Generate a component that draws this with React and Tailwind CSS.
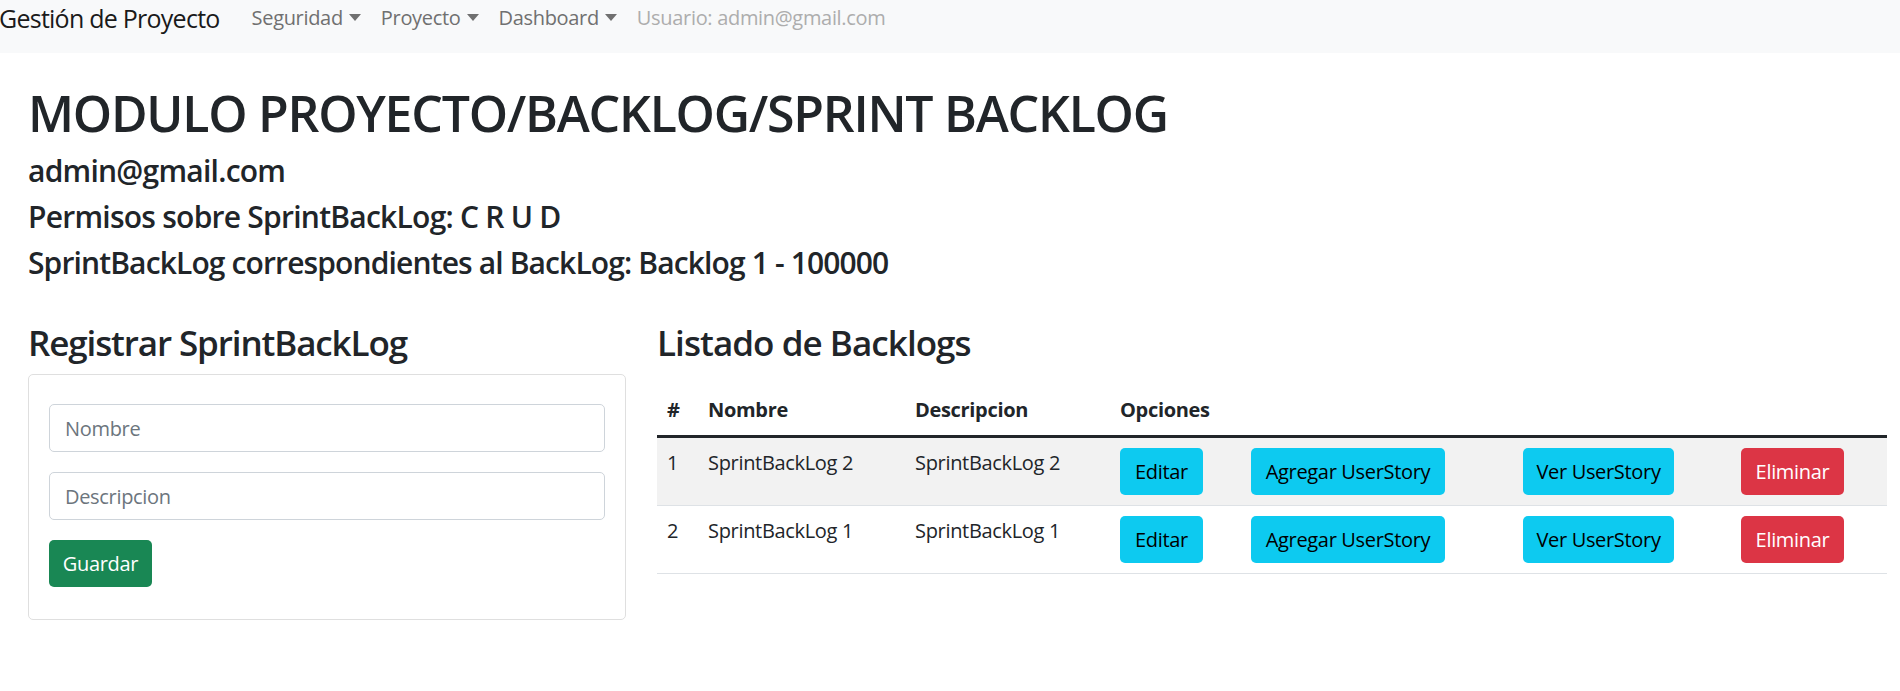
import { useState } from "react";

const rows = [
  { id: 1, nombre: "SprintBackLog 2", descripcion: "SprintBackLog 2" },
  { id: 2, nombre: "SprintBackLog 1", descripcion: "SprintBackLog 1" },
];

function Caret() {
  return (
    <span className="ml-[6px] inline-block h-0 w-0 border-x-[6px] border-t-[7px] border-x-transparent border-t-current align-[4px]" />
  );
}

function Navbar() {
  const items = ["Seguridad", "Proyecto", "Dashboard"];
  return (
    <nav className="flex h-[53px] items-start bg-[#f8f9fa] tracking-[-0.02em]">
      <a href="#" className="-ml-px mr-[22px] text-[25px] leading-[37px] tracking-[-0.03em] text-[#1a1a1a]">
        Gestión de Proyecto
      </a>
      {items.map((item) => (
        <a key={item} href="#" className="mt-[3px] px-[10px] text-[20px] leading-[30px] text-[#707070]">
          {item}
          <Caret />
        </a>
      ))}
      <span className="mt-[3px] px-[10px] text-[20px] leading-[30px] text-[#adadad]">Usuario: admin@gmail.com</span>
    </nav>
  );
}

function RegisterForm() {
  const [nombre, setNombre] = useState("");
  const [descripcion, setDescripcion] = useState("");
  return (
    <div>
      <h3 className="mb-[10px] text-[35px] font-semibold leading-[42px] tracking-[-0.032em]">Registrar SprintBackLog</h3>
      <div className="rounded-[5px] border border-[#dfdfdf] px-[20px] pt-[29px] pb-[32px]">
        <input
          value={nombre}
          onChange={(e) => setNombre(e.target.value)}
          placeholder="Nombre"
          className="mb-[20px] block h-[48px] w-full rounded-[5px] border border-[#ced4da] px-[15px] text-[20px] placeholder:text-[#6c757d]"
        />
        <input
          value={descripcion}
          onChange={(e) => setDescripcion(e.target.value)}
          placeholder="Descripcion"
          className="mb-[20px] block h-[48px] w-full rounded-[5px] border border-[#ced4da] px-[15px] text-[20px] placeholder:text-[#6c757d]"
        />
        <button className="h-[47px] w-[103px] rounded-[5px] bg-[#198754] text-[20px] text-white">Guardar</button>
      </div>
    </div>
  );
}

function BacklogTable() {
  return (
    <div>
      <h3 className="mb-[21px] text-[35px] font-semibold leading-[42px] tracking-[-0.027em]">Listado de Backlogs</h3>
      <table className="w-full table-fixed border-collapse text-left text-[20px] leading-[30px]">
        <colgroup>
          <col className="w-[41px]" />
          <col className="w-[207px]" />
          <col className="w-[205px]" />
          <col className="w-[131px]" />
          <col className="w-[272px]" />
          <col className="w-[218px]" />
          <col />
        </colgroup>
        <thead>
          <tr className="border-b-[3px] border-[#212529]">
            <th className="p-[10px] font-bold">#</th>
            <th className="p-[10px] font-bold">Nombre</th>
            <th className="p-[10px] font-bold">Descripcion</th>
            <th className="p-[10px] font-bold">Opciones</th>
            <th className="p-[10px]" />
            <th className="p-[10px]" />
            <th className="p-[10px]" />
          </tr>
        </thead>
        <tbody>
          {rows.map((row, i) => (
            <tr key={row.id} className={i % 2 === 0 ? "border-b border-[#dee2e6] bg-[#f2f2f2]" : "border-b border-[#dee2e6]"}>
              <td className="p-[10px] align-top">{row.id}</td>
              <td className="p-[10px] align-top">{row.nombre}</td>
              <td className="p-[10px] align-top">{row.descripcion}</td>
              <td className="p-[10px] align-top">
                <button className="h-[47px] w-[83px] rounded-[5px] bg-[#0dcaf0] text-black">Editar</button>
              </td>
              <td className="p-[10px] align-top">
                <button className="h-[47px] w-[194px] rounded-[5px] bg-[#0dcaf0] text-black">Agregar UserStory</button>
              </td>
              <td className="p-[10px] align-top">
                <button className="h-[47px] w-[151px] rounded-[5px] bg-[#0dcaf0] text-black">Ver UserStory</button>
              </td>
              <td className="p-[10px] align-top">
                <button className="h-[47px] w-[103px] rounded-[5px] bg-[#dc3545] text-white">Eliminar</button>
              </td>
            </tr>
          ))}
        </tbody>
      </table>
    </div>
  );
}

export default function App() {
  return (
    <div className="min-h-[691px] bg-white font-['Open_Sans',sans-serif] tracking-[-0.02em] text-[#212529]">
      <Navbar />
      <div className="pl-[28px] pr-[13px] pt-[30px]">
        <h1 className="mb-[10px] text-[50px] font-semibold leading-[60px] tracking-[-0.025em]">
          MODULO PROYECTO/BACKLOG/SPRINT BACKLOG
        </h1>
        <h4 className="mb-[10px] text-[30px] font-semibold leading-[36px] tracking-[-0.025em]">admin@gmail.com</h4>
        <h4 className="mb-[10px] text-[30px] font-semibold leading-[36px] tracking-[-0.025em]">
          Permisos sobre SprintBackLog: C R U D
        </h4>
        <h4 className="mb-[10px] text-[30px] font-semibold leading-[36px] tracking-[-0.029em]">
          SprintBackLog correspondientes al BackLog: Backlog 1 - 100000
        </h4>
        <div className="mt-[41px] grid grid-cols-[598px_1fr] gap-[31px]">
          <RegisterForm />
          <BacklogTable />
        </div>
      </div>
    </div>
  );
}
